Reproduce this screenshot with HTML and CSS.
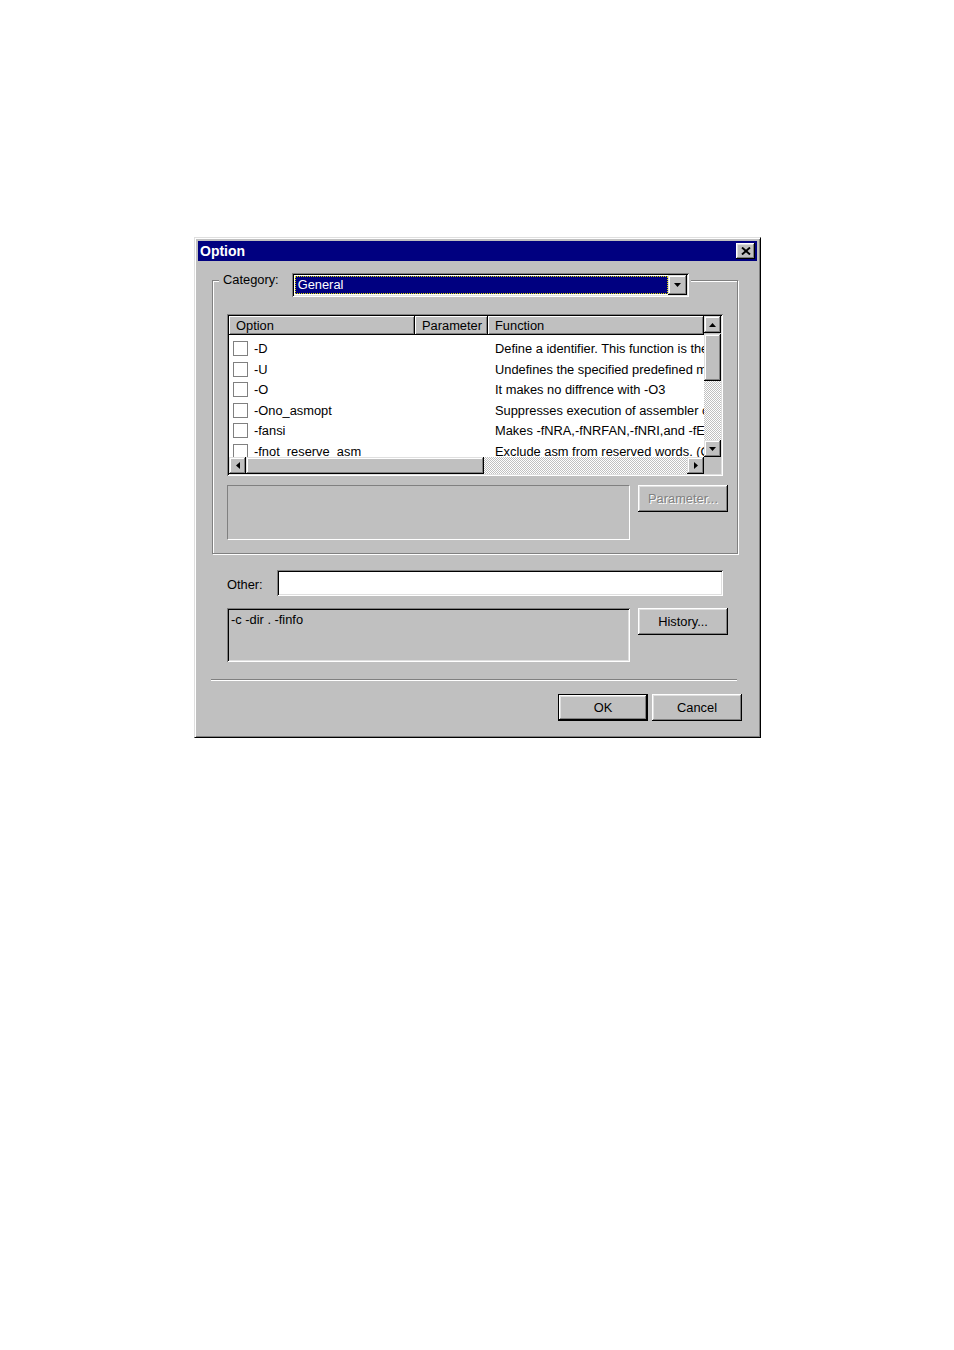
FILE: index.html
```html
<!DOCTYPE html>
<html>
<head>
<meta charset="utf-8">
<title>Option</title>
<link rel="stylesheet" href="styles.css">
</head>
<body>
<div class="window">
  <div class="titlebar">
    <span class="title">Option</span>
    <span class="close"><svg width="10" height="8" viewBox="0 0 10 8"><path d="M1 0.5 L9 7.5 M9 0.5 L1 7.5" stroke="#000" stroke-width="1.9" fill="none"/></svg></span>
  </div>
  <div class="group">
    <div class="legend">
      <span class="legend-label">Category:</span>
      <div class="combo">
        <div class="combo-sel">General</div>
        <div class="sbtn combo-btn"><svg width="7" height="4" viewBox="0 0 7 4"><polygon points="0,0 7,0 3.5,4" fill="#000"/></svg></div>
      </div>
    </div>
    <div class="listview">
      <div class="lv-body">
        <div class="lv-header">
          <div class="hcell c1">Option</div>
          <div class="hcell c2">Parameter</div>
          <div class="hcell c3">Function</div>
        </div>
        <div class="lv-rows">
          <div class="row"><div class="cell1"><span class="chk"></span>-D</div><div class="cell2"></div><div class="cell3">Define a identifier. This function is the same as #define</div></div>
          <div class="row"><div class="cell1"><span class="chk"></span>-U</div><div class="cell2"></div><div class="cell3">Undefines the specified predefined macro</div></div>
          <div class="row"><div class="cell1"><span class="chk"></span>-O</div><div class="cell2"></div><div class="cell3">It makes no diffrence with -O3</div></div>
          <div class="row"><div class="cell1"><span class="chk"></span>-Ono_asmopt</div><div class="cell2"></div><div class="cell3">Suppresses execution of assembler optimizer</div></div>
          <div class="row"><div class="cell1"><span class="chk"></span>-fansi</div><div class="cell2"></div><div class="cell3">Makes -fNRA,-fNRFAN,-fNRI,and -fE valid</div></div>
          <div class="row"><div class="cell1"><span class="chk"></span>-fnot_reserve_asm</div><div class="cell2"></div><div class="cell3">Exclude asm from reserved words. (Only _asm is valid)</div></div>
        </div>
      </div>
      <div class="vscroll">
        <div class="sbtn sq"><svg width="7" height="4" viewBox="0 0 7 4"><polygon points="0,4 7,4 3.5,0" fill="#000"/></svg></div>
        <div class="sbtn vthumb"></div>
        <div class="track"></div>
        <div class="sbtn sq"><svg width="7" height="4" viewBox="0 0 7 4"><polygon points="0,0 7,0 3.5,4" fill="#000"/></svg></div>
      </div>
      <div class="hscroll">
        <div class="sbtn sq"><svg width="4" height="7" viewBox="0 0 4 7"><polygon points="4,0 4,7 0,3.5" fill="#000"/></svg></div>
        <div class="sbtn hthumb"></div>
        <div class="track"></div>
        <div class="sbtn sq"><svg width="4" height="7" viewBox="0 0 4 7"><polygon points="0,0 0,7 4,3.5" fill="#000"/></svg></div>
      </div>
      <div class="corner"></div>
    </div>
    <div class="panel-row">
      <div class="desc"></div>
      <button class="btn disabled">Parameter...</button>
    </div>
  </div>
  <div class="field-row">
    <span class="lbl">Other:</span>
    <div class="input"></div>
  </div>
  <div class="hist-row">
    <div class="hist">-c -dir . -finfo</div>
    <button class="btn">History...</button>
  </div>
  <div class="separator"></div>
  <div class="actions">
    <button class="btn default">OK</button>
    <button class="btn">Cancel</button>
  </div>
</div>
</body>
</html>
```
FILE: styles.css
```css
* { box-sizing: border-box; }
body {
  margin: 0;
  background: #fff;
  font-family: "Liberation Sans", Arial, sans-serif;
  font-size: 12.85px;
  color: #000;
}
.window {
  width: 567px;
  height: 501px;
  margin: 237px 0 0 194px;
  background: #c0c0c0;
  border: 1px solid;
  border-color: #dfdfdf #000 #000 #dfdfdf;
  box-shadow: inset 1px 1px #fff, inset -1px -1px #808080;
  padding: 3px;
  display: flex;
  flex-direction: column;
}
.titlebar {
  height: 20px;
  flex: none;
  background: #000080;
  color: #fff;
  display: flex;
  align-items: center;
  justify-content: space-between;
  padding: 0 2px;
}
.title { font-weight: bold; font-size: 14px; }
.close {
  width: 19px;
  height: 16px;
  background: #c0c0c0;
  box-shadow: inset -1px -1px #000, inset 1px 1px #fff, inset -2px -2px #808080, inset 2px 2px #dfdfdf;
  display: flex;
  align-items: center;
  justify-content: center;
}
.close svg { display: block; }

.group {
  position: relative;
  flex: none;
  margin: 19px 0 0 14px;
  width: 526px;
  height: 274px;
  border: 1px solid #808080;
  box-shadow: inset 1px 1px #fff, 1px 1px #fff;
  padding: 33px 0 0 14px;
}
.legend {
  position: absolute;
  top: -8px;
  left: 6px;
  display: flex;
  align-items: flex-start;
  gap: 13px;
  padding: 0 2px 0 4px;
  background: #c0c0c0;
}
.legend-label { line-height: 14px; }
.combo {
  width: 397px;
  height: 24px;
  background: #fff;
  box-shadow: inset 1px 1px #808080, inset -1px -1px #fff, inset 2px 2px #000, inset -2px -2px #dfdfdf;
  padding: 2px;
  display: flex;
}
.combo-sel {
  flex: 1;
  margin: 1px 0 1px 1px;
  background: #000080;
  color: #fff;
  border: 1px dotted #d8d800;
  padding-left: 2px;
  line-height: 16px;
}
.sbtn {
  background: #c0c0c0;
  box-shadow: inset -1px -1px #000, inset 1px 1px #dfdfdf, inset -2px -2px #808080, inset 2px 2px #fff;
  display: flex;
  align-items: center;
  justify-content: center;
  flex: none;
}
.sbtn svg { display: block; }
.combo-btn { width: 19px; height: 20px; }

.listview {
  width: 496px;
  height: 162px;
  box-shadow: inset 1px 1px #808080, inset -1px -1px #fff, inset 2px 2px #000, inset -2px -2px #dfdfdf;
  padding: 2px;
  display: grid;
  grid-template-columns: 475px 17px;
  grid-template-rows: 141px 17px;
  background: #c0c0c0;
}
.lv-body {
  overflow: hidden;
  background: #fff;
  display: flex;
  flex-direction: column;
}
.lv-header { display: flex; height: 19px; flex: none; }
.hcell {
  flex: none;
  height: 19px;
  line-height: 18px;
  padding: 1px 0 0 7px;
  background: #c0c0c0;
  box-shadow: inset -1px -1px #000, inset 1px 1px #fff, inset -2px -2px #808080;
  white-space: nowrap;
}
.c1 { width: 186px; }
.c2 { width: 73px; }
.c3 { width: 216px; }
.lv-rows { padding-top: 3.3px; }
.row {
  display: flex;
  align-items: center;
  height: 20.6px;
  white-space: nowrap;
}
.cell1 {
  width: 186px;
  flex: none;
  display: flex;
  align-items: center;
  gap: 6px;
  padding-left: 4px;
}
.chk {
  width: 15px;
  height: 15px;
  border: 1px solid #808080;
  background: #fff;
  flex: none;
}
.cell2 { width: 73px; flex: none; }
.cell3 { padding-left: 7px; flex: none; }

.vscroll { display: flex; flex-direction: column; }
.hscroll { display: flex; }
.sq { width: 17px; height: 17px; }
.vthumb { width: 17px; height: 47px; margin-top: 1px; }
.hthumb { width: 238px; height: 17px; }
.track {
  flex: 1;
  background-color: #fff;
  background-image: repeating-conic-gradient(#c0c0c0 0 25%, #fff 0 50%);
  background-size: 2px 2px;
}
.corner { background: #c0c0c0; }

.panel-row {
  display: flex;
  align-items: flex-start;
  gap: 8px;
  margin-top: 9px;
}
.desc {
  width: 403px;
  height: 55px;
  border: 1px solid;
  border-color: #808080 #fff #fff #808080;
}
.btn {
  width: 90px;
  height: 27px;
  border: 0;
  padding: 0;
  margin: 0;
  background: #c0c0c0;
  font: inherit;
  color: #000;
  box-shadow: inset -1px -1px #000, inset 1px 1px #fff, inset -2px -2px #808080, inset 2px 2px #dfdfdf;
  display: flex;
  align-items: center;
  justify-content: center;
  flex: none;
}
.btn.disabled { color: #808080; text-shadow: 1px 1px #fff; }
.btn.default {
  border: 1px solid #000;
  box-shadow: inset -1px -1px #000, inset 1px 1px #fff, inset -2px -2px #808080, inset 2px 2px #dfdfdf;
}

.field-row {
  display: flex;
  align-items: center;
  margin: 16px 0 0 29px;
}
.lbl { width: 50px; flex: none; padding-top: 3px; }
.input {
  width: 446px;
  height: 26px;
  background: #fff;
  box-shadow: inset 1px 1px #808080, inset -1px -1px #fff, inset 2px 2px #000, inset -2px -2px #dfdfdf;
}

.hist-row {
  display: flex;
  align-items: flex-start;
  gap: 8px;
  margin: 12px 0 0 29px;
}
.hist {
  width: 403px;
  height: 54px;
  box-shadow: inset 1px 1px #808080, inset -1px -1px #fff, inset 2px 2px #000, inset -2px -2px #dfdfdf;
  padding: 5px 4px;
  line-height: 14px;
}

.separator {
  margin: 17px 0 0 13px;
  width: 526px;
  height: 2px;
  border-top: 1px solid #808080;
  border-bottom: 1px solid #fff;
}
.actions {
  display: flex;
  justify-content: flex-end;
  gap: 4px;
  margin-top: 13px;
  padding-right: 15px;
}
```
